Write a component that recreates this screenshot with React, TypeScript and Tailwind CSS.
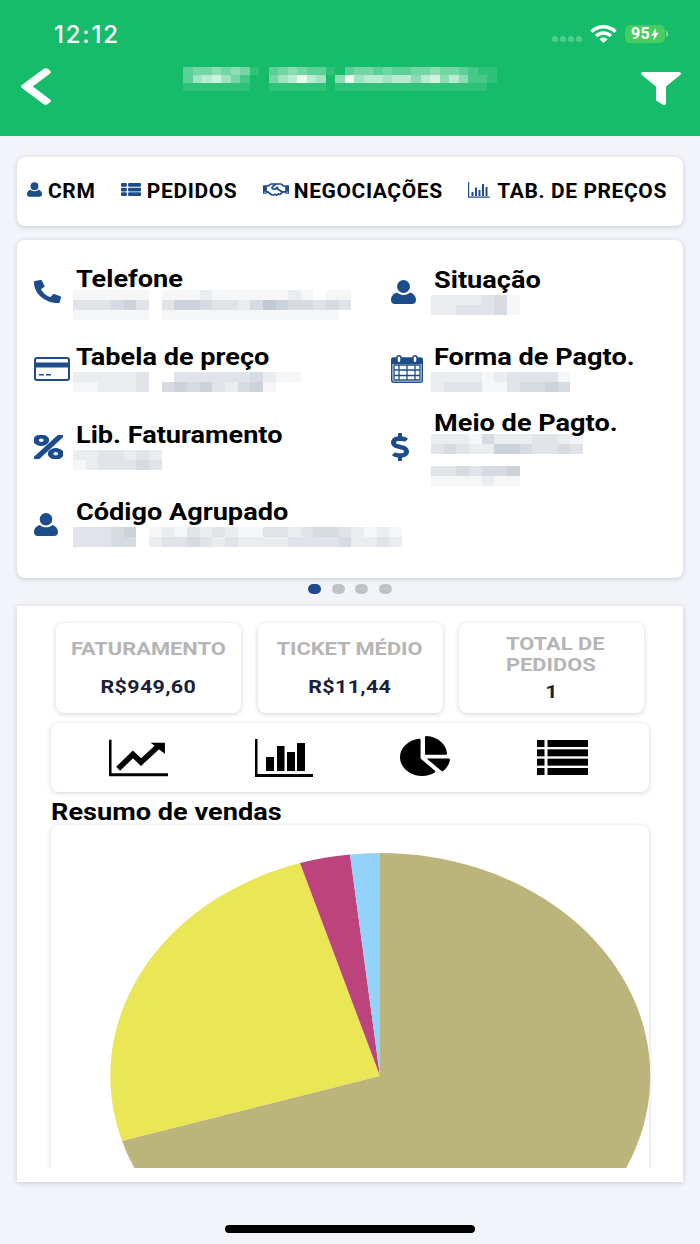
import { FaChevronLeft, FaFilter, FaPercent, FaDollarSign, FaPhoneAlt, FaChartPie, FaRegHandshake, FaThList } from "react-icons/fa";
import type { ReactNode } from "react";

const BLUE = "#1d4c8c";

// pixelated (censored) text: every digit is one mosaic cell, 0 = nothing, 9 = darkest
const Mosaic = ({ rows, cell = 12.67, rowH = 10, light = false }: { rows: string[]; cell?: number; rowH?: number; light?: boolean }) => (
  <div className="flex flex-col">
    {rows.map((row, i) => (
      <div key={i} className="flex">
        {row.split("").map((d, j) => (
          <div
            key={j}
            style={{
              width: cell,
              height: rowH,
              backgroundColor: light ? `rgba(255,255,255,${Number(d) / 10})` : `rgba(120,138,158,${Number(d) / 13})`,
            }}
          />
        ))}
      </div>
    ))}
  </div>
);

const UserIcon = ({ className }: { className: string }) => (
  <svg viewBox="0 0 25 24" className={className} fill={BLUE}>
    <ellipse cx="12.5" cy="6.5" rx="6.5" ry="6.5" />
    <path d="M6 12.5c1.5 1.6 3.8 2.4 6.5 2.4s5-.8 6.5-2.4c3.5 1 6 3.5 6 7.5 0 2.5-1.5 4-4 4H4c-2.500 0-4-1.500-4-4 0-4 2.500-6.500 6-7.500z" />
  </svg>
);

const CardIcon = ({ className }: { className: string }) => (
  <svg viewBox="0 0 36 24" className={className}>
    <rect x="1" y="1" width="34" height="22" rx="2" fill="#fff" stroke={BLUE} strokeWidth="2" />
    <rect x="1" y="5.500" width="34" height="5" fill={BLUE} />
    <rect x="5" y="17" width="5" height="1.500" fill={BLUE} />
    <rect x="12" y="17" width="5" height="1.500" fill={BLUE} />
  </svg>
);

const CalendarIcon = ({ className }: { className: string }) => (
  <svg viewBox="0 0 32 28" className={className}>
    <rect x="0.750" y="3" width="30.500" height="24.250" rx="2" fill="#fff" stroke={BLUE} strokeWidth="1.500" />
    <rect x="0.750" y="3" width="30.500" height="6" fill={BLUE} />
    <rect x="6" y="0.750" width="4" height="7" rx="2" fill="#fff" stroke={BLUE} strokeWidth="1.500" />
    <rect x="22" y="0.750" width="4" height="7" rx="2" fill="#fff" stroke={BLUE} strokeWidth="1.500" />
    <path d="M3 15h26M3 20.500h26M8 10v15M16 10v15M24 10v15M3 10h26v15H3z" fill="none" stroke={BLUE} strokeWidth="1.300" />
  </svg>
);

const TabChartIcon = ({ className }: { className: string }) => (
  <svg viewBox="0 0 22 16" className={className} fill="none" stroke={BLUE} strokeWidth="1.200">
    <path d="M.6 0v15.200h21" />
    <path d="M4.500 14v-4M8 14V5.500M11.500 14V8M15 14V2M18.500 14V5" strokeWidth="2" />
  </svg>
);

const TrendIcon = ({ className }: { className: string }) => (
  <svg viewBox="0 0 58 36" className={className} fill="#000">
    <path d="M0 0h2.500v33h55.500v3H0z" />
    <path d="M9 28.500L23.500 14.500l8 7.500 18-16.500" fill="none" stroke="#000" strokeWidth="5.500" />
    <path d="M41 3h14v11z" />
  </svg>
);

const BarsIcon = ({ className }: { className: string }) => (
  <svg viewBox="0 0 58 38" className={className} fill="#000">
    <path d="M0 0h2.500v35h55.500v3H0z" />
    <rect x="11" y="18" width="8" height="14" />
    <rect x="22" y="7" width="7.500" height="25" />
    <rect x="32" y="13" width="8" height="19" />
    <rect x="42" y="4" width="8" height="28" />
  </svg>
);

const ListIcon = ({ className }: { className: string }) => (
  <svg viewBox="0 0 51 35" className={className} fill="#000">
    {[0, 9.330, 18.660, 28].map((y) => (
      <g key={y}>
        <rect x="0" y={y} width="7.500" height="7" />
        <rect x="10.500" y={y} width="40.500" height="7" />
      </g>
    ))}
  </svg>
);

const InfoItem = ({ icon, title, rows, gap = "w-[42px]", nudge = "-translate-y-[2px]" }: { icon: ReactNode; title: string; rows: string[][]; gap?: string; nudge?: string }) => (
  <div className="flex items-center h-[77.5px]">
    <div className={`${gap} shrink-0 flex items-center`}>{icon}</div>
    <div className="flex flex-col">
      <div className={`text-[24px] leading-[26px] font-bold text-black whitespace-nowrap origin-left scale-x-[1.13] ${nudge}`}>{title}</div>
      <div className="flex flex-col gap-[12px] -ml-[3px]">
        {rows.map((r, i) => (
          <Mosaic key={i} rows={r} />
        ))}
      </div>
    </div>
  </div>
);

const NavItem = ({ icon, label, gap }: { icon: ReactNode; label: string; gap: string }) => (
  <div className={`flex items-center ${gap}`}>
    <div className="-mt-[4px] flex">{icon}</div>
    <span className="text-[21px] font-bold text-black leading-none tracking-[0.6px]">{label}</span>
  </div>
);

const StatCard = ({ label, value, multi }: { label: ReactNode; value: string; multi?: boolean }) => (
  <div className="w-[185px] h-[90px] bg-white rounded-[8px] shadow-[0_1px_5px_rgba(40,50,80,0.22)] flex flex-col items-center text-center">
    <div className={`text-[#b5b5b5] font-bold text-[19px] leading-[21px] scale-x-[1.15] ${multi ? "mt-[10px] text-left w-[85px] mr-[7px] origin-left whitespace-nowrap" : "mt-[15px]"}`}>{label}</div>
    <div className={`text-[#1b1f3b] font-bold text-[19px] leading-[24px] tracking-[0.3px] scale-x-[1.13] ${multi ? "mt-[5px]" : "mt-[16px]"}`}>{value}</div>
  </div>
);

export default function App() {
  return (
    <div className="w-[700px] h-[1244px] bg-[#f3f4f9] relative overflow-hidden font-['Roboto',sans-serif]">
      {/* header */}
      <div className="h-[136px] bg-[#16bc69] relative">
        <div className="flex items-start justify-between pl-[54px] pr-[32px] pt-[20px]">
          <span className="text-white text-[24px] leading-[30px] font-medium tracking-[1.8px] font-['Inter',sans-serif]">12:12</span>
          <div className="flex items-center mt-[5px]">
            <div className="flex gap-[2px] mr-[8px] mt-[9px] opacity-25">
              {[0, 1, 2, 3].map((i) => (
                <div key={i} className="w-[6px] h-[6px] rounded-full bg-white" />
              ))}
            </div>
            <svg viewBox="0 0 27 18" className="w-[27px] h-[18px] mr-[8px]" fill="#fff">
              <path d="M13.500 0C8.300 0 3.700 2 .3 5.400l2.400 2.500C5.500 5.100 9.300 3.400 13.500 3.400s8 1.700 10.800 4.500l2.400-2.500C23.300 2 18.700 0 13.500 0z" />
              <path d="M13.500 6.300c-3.400 0-6.400 1.300-8.600 3.500l2.400 2.500c1.600-1.600 3.800-2.500 6.200-2.500s4.600.9 6.200 2.500l2.400-2.500c-2.200-2.200-5.200-3.500-8.600-3.500z" />
              <path d="M13.500 12.500c-1.600 0-3 .6-4 1.700l4 3.800 4-3.800c-1-1.100-2.400-1.700-4-1.700z" />
            </svg>
            <div className="w-[40px] h-[18px] rounded-[5px] bg-[#45cd62] flex items-center justify-center text-white text-[16px] font-bold leading-none tracking-[0.3px]">
              95
              <svg viewBox="0 0 8 14" className="w-[8px] h-[13px] ml-[1px]" fill="#fff">
                <path d="M5 0L0 8h3l-1 6 6-9H4.500z" />
              </svg>
            </div>
            <div className="w-[2px] h-[6px] ml-[1px] rounded-r-full bg-white/40" />
          </div>
        </div>
        <div className="flex items-center justify-between pl-[18px] pr-[19px] mt-[15px]">
          <FaChevronLeft className="w-[36px] h-[43px] text-white" preserveAspectRatio="none" />
          <div className="-mt-[16px] -ml-[6px]">
            <Mosaic
              light
              cell={9.500}
              rowH={8}
              rows={[
                "3445454103454331034434334454432110",
                "3678642004679760596776775785752210",
                "1111111001111110111111111111111100",
              ]}
            />
          </div>
          <FaFilter className="w-[40px] h-[33px] mt-[3px] text-white" preserveAspectRatio="none" />
        </div>
      </div>

      <div className="px-[17px]">
        {/* tabs */}
        <div className="mt-[21px] h-[69px] bg-white rounded-[8px] shadow-[0_1px_5px_rgba(40,50,80,0.22)] flex items-center justify-between pl-[10px] pr-[16px]">
          <NavItem gap="gap-[6px]" icon={<UserIcon className="w-[15px] h-[15px]" />} label="CRM" />
          <NavItem gap="gap-[6px]" icon={<FaThList className="w-[20px] h-[15px]" color={BLUE} preserveAspectRatio="none" />} label="PEDIDOS" />
          <NavItem gap="gap-[5px]" icon={<FaRegHandshake className="w-[26px] h-[17px]" color={BLUE} preserveAspectRatio="none" />} label="NEGOCIAÇÕES" />
          <NavItem gap="gap-[7px]" icon={<TabChartIcon className="w-[22px] h-[16px]" />} label="TAB. DE PREÇOS" />
        </div>

        {/* info */}
        <div className="mt-[14px] h-[338px] bg-white rounded-[8px] shadow-[0_1px_5px_rgba(40,50,80,0.22)] grid grid-cols-[357px_1fr] pl-[17px] pt-[13px] content-start">
          <InfoItem
            nudge="translate-y-[2px]"
            icon={<FaPhoneAlt className="w-[27px] h-[23px]" color={BLUE} preserveAspectRatio="none" />}
            title="Telefone"
            rows={[["1111110111211111121011", "3334530355433246544343", "1111110111111111111110"]]}
          />
          <InfoItem
            gap="w-[43px]"
            icon={<UserIcon className="w-[25px] h-[24px]" />}
            title="Situação"
            rows={[["2222341", "2233341"]]}
          />
          <InfoItem
            icon={<CardIcon className="w-[36px] h-[24px]" />}
            title="Tabela de preço"
            rows={[["222223003333334211", "112223045453245100"]]}
          />
          <InfoItem
            gap="w-[43px]"
            icon={<CalendarIcon className="w-[32px] h-[28px]" />}
            title="Forma de Pagto."
            rows={[["22221233331", "23331134454"]]}
          />
          <InfoItem
            icon={<FaPercent className="w-[29px] h-[24px]" color={BLUE} stroke={BLUE} strokeWidth={22} preserveAspectRatio="none" />}
            title="Lib. Faturamento"
            rows={[["2233232", "1233343"]]}
          />
          <InfoItem
            gap="w-[43px]"
            nudge="translate-y-[2px]"
            icon={<FaDollarSign className="w-[18px] h-[28px]" color={BLUE} preserveAspectRatio="none" />}
            title="Meio de Pagto."
            rows={[["222142223321", "343225543343"], ["3343445", "1111211"]]}
          />
          <div className="col-span-2">
            <InfoItem
              icon={<UserIcon className="w-[24px] h-[23px]" />}
              title="Código Agrupado"
              rows={[["33345012132321133234432121", "33344023343232222333342232"]]}
            />
          </div>
        </div>

        {/* dots */}
        <div className="h-[22px] mb-[6px] flex items-center justify-center gap-[10.5px]">
          <div className="w-[13px] h-[10px] rounded-full bg-[#1d4c8c]" />
          <div className="w-[13px] h-[10px] rounded-full bg-[#c0c2c6]" />
          <div className="w-[13px] h-[10px] rounded-full bg-[#c0c2c6]" />
          <div className="w-[13px] h-[10px] rounded-full bg-[#c0c2c6]" />
        </div>

        {/* dashboard */}
        <div className="h-[576px] bg-white shadow-[0_1px_5px_rgba(40,50,80,0.22)] px-[34px] pt-[17px]">
          <div className="flex justify-between px-[5px] w-[598px]">
            <StatCard label="FATURAMENTO" value="R$949,60" />
            <StatCard label="TICKET MÉDIO" value="R$11,44" />
            <StatCard
              multi
              label={
                <>
                  TOTAL DE
                  <br />
                  PEDIDOS
                </>
              }
              value="1"
            />
          </div>

          <div className="mt-[10px] w-[598px] h-[69px] bg-white rounded-[8px] shadow-[0_1px_5px_rgba(40,50,80,0.22)] flex items-center justify-center gap-[87px] pr-[3px]">
            <TrendIcon className="w-[59px] h-[38px]" />
            <BarsIcon className="w-[58px] h-[38px]" />
            <FaChartPie className="w-[50px] h-[40px] -mt-[4px] text-black" preserveAspectRatio="none" />
            <ListIcon className="w-[51px] h-[35px]" />
          </div>

          <div className="mt-[7px] text-[23px] leading-[28px] font-bold text-black whitespace-nowrap origin-left scale-x-[1.18]">Resumo de vendas</div>

          {/* chart, cut off at the bottom of the scroll area */}
          <div className="-mx-[8px] px-[8px] h-[345px] -mt-[4px] pt-[2px] overflow-hidden">
            <div className="w-[598px] h-[400px] bg-white rounded-t-[8px] shadow-[0_1px_5px_rgba(40,50,80,0.22)]">
              <svg viewBox="51 825 600 360" className="w-[600px] h-[360px] overflow-visible">
                <path d="M380 1076L122 1141A270 223 0 0 1 300 863Z" fill="#ebe655" />
                <path d="M380 1076L300 863A270 223 0 0 1 350 854.500Z" fill="#bc437b" />
                <path d="M380 1076L350 854.500A270 223 0 0 1 380 853Z" fill="#93d2fb" />
                <path d="M380 1076L380 853A270 223 0 1 1 122 1141Z" fill="#bbb57b" />
              </svg>
            </div>
          </div>
        </div>
      </div>

      {/* home indicator */}
      <div className="absolute left-[225px] bottom-[11px] w-[250px] h-[8px] rounded-full bg-black" />
    </div>
  );
}
